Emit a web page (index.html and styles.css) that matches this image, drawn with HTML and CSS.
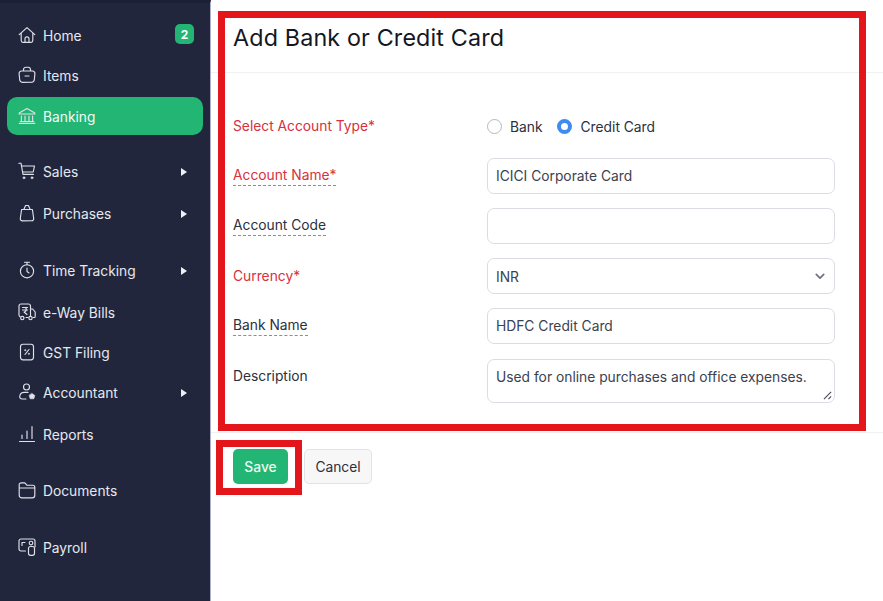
FILE: index.html
```html
<!DOCTYPE html>
<html lang="en">
<head>
<meta charset="utf-8">
<title>Add Bank or Credit Card</title>
<link rel="stylesheet" href="styles.css">
</head>
<body>
<div class="app">
  <nav class="sidebar">
    <a class="item first"><svg class="ico" viewBox="0 0 18 18"><path d="M1.200 8.600 9 1.600l7.800 7M3.200 7.200v7.400a1.800 1.800 0 0 0 1.800 1.800h8a1.800 1.800 0 0 0 1.800-1.800V7.200M7 16.200v-3.400a2 2 0 0 1 4 0v3.400"/></svg><span class="lbl">Home</span><span class="badge">2</span></a>
    <a class="item gap-g"><svg class="ico" viewBox="0 0 18 18"><path d="M5.500 5V3.600A2.400 2.400 0 0 1 7.900 1.200h2.200a2.400 2.400 0 0 1 2.400 2.400V5M3.500 5h11a2.500 2.500 0 0 1 2.400 2.800l-.6 6a2.800 2.800 0 0 1-2.800 2.500H4.500a2.800 2.800 0 0 1-2.800-2.500l-.6-6A2.500 2.500 0 0 1 3.500 5ZM7 10h4"/></svg><span class="lbl">Items</span></a>
    <a class="item active"><svg class="ico" viewBox="0 0 18 18"><path d="M1.200 6 9 1.400 16.800 6v1H1.200ZM3.400 9v5M7 9v5M11 9v5M14.600 9v5M1.200 16.400h15.600M2.200 14.500h13.600"/></svg><span class="lbl">Banking</span></a>
    <a class="item gap-a"><svg class="ico" viewBox="0 0 18 18"><path d="M.8 1.200h2.200l2 11.200h10.400M3.500 4h13l-1.300 6H4.600"/><circle class="dot" cx="6" cy="15.800" r="1"/><circle class="dot" cx="14" cy="15.800" r="1"/></svg><span class="lbl">Sales</span><span class="arrow"></span></a>
    <a class="item gap-b"><svg class="ico" viewBox="0 0 18 18"><path d="M3.600 5.500h10.800l1.300 9a2 2 0 0 1-2 2.300H4.300a2 2 0 0 1-2-2.300ZM5.800 5.500 7.600 1.500h2.800l1.800 4"/></svg><span class="lbl">Purchases</span><span class="arrow"></span></a>
    <a class="item gap-c"><svg class="ico" viewBox="0 0 18 18"><circle cx="9" cy="10.300" r="6.600"/><path d="M6.500 1.200h5M9 1.200v2.500M9 7v3.500l2 1.500"/></svg><span class="lbl">Time Tracking</span><span class="arrow"></span></a>
    <a class="item gap-b"><svg class="ico" viewBox="0 0 18 18"><path d="M12.500 13V3a2 2 0 0 0-2-2H3a2 2 0 0 0-2 2v9a2 2 0 0 0 1 1.700M8 14.500h2M12.500 6h2.200l2.500 3v4.500a1 1 0 0 1-1 1h-1M4.500 4.500h5M4.500 7h5M7 4.500c1.800 0 1.800 4.500-1 4.500l3 2.500"/><circle cx="4.300" cy="15" r="1.700"/><circle cx="12.500" cy="15" r="1.700"/></svg><span class="lbl">e-Way Bills</span></a>
    <a class="item gap-d"><svg class="ico" viewBox="0 0 18 18"><rect x="2.500" y="1.200" width="13" height="15.600" rx="2.500"/><path d="m11 6.500-4 5"/><circle class="dot" cx="7.200" cy="7.200" r=".6"/><circle class="dot" cx="10.800" cy="10.800" r=".6"/></svg><span class="lbl">GST Filing</span></a>
    <a class="item gap-d"><svg class="ico" viewBox="0 0 18 18"><circle cx="8.500" cy="4" r="3"/><path d="M10 9.400H6.200a4.400 4.400 0 0 0-4.400 3.500 2.400 2.400 0 0 0 2.400 3.100H8"/><path class="star" d="m14 10.500 2.800 2-1 3.300h-3.600l-1-3.300Z"/></svg><span class="lbl">Accountant</span><span class="arrow"></span></a>
    <a class="item gap-b"><svg class="ico" viewBox="0 0 18 18"><path d="M1.500 16.500h15M4 13.500V10M9 13.500V6M14 13.500V1.500"/></svg><span class="lbl">Reports</span></a>
    <a class="item gap-e"><svg class="ico" viewBox="0 0 18 18"><path d="M1.200 7V3.800a2 2 0 0 1 2-2h3.600l2 2.400h6a2 2 0 0 1 2 2V7M1.200 7h15.600v7.200a2.600 2.600 0 0 1-2.600 2.600H3.800a2.600 2.600 0 0 1-2.600-2.600Z"/></svg><span class="lbl">Documents</span></a>
    <a class="item gap-f"><svg class="ico" viewBox="0 0 18 18"><path d="M7.500 13H3a2 2 0 0 1-2-2V3a2 2 0 0 1 2-2h12a2 2 0 0 1 2 2v6M4 4.500h3M4 4.500v3"/><rect x="10.500" y="8.500" width="6" height="8.800" rx="2"/><circle cx="13" cy="5" r="1.800"/></svg><span class="lbl">Payroll</span></a>
  </nav>

  <main class="main">
    <header class="head"><h1 class="title">Add Bank or Credit Card</h1></header>
    <form class="form">
      <span class="label req top">Select Account Type*</span>
      <div class="radios">
        <span class="radio"></span><span class="radio-text">Bank</span>
        <span class="radio on"></span><span class="radio-text">Credit Card</span>
      </div>
      <span class="label req tip">Account Name*</span>
      <div class="field">ICICI Corporate Card</div>
      <span class="label tip">Account Code</span>
      <div class="field"></div>
      <span class="label req">Currency*</span>
      <div class="field select">INR<svg class="chev" viewBox="0 0 12 8"><path d="m1.500 1.500 4.500 4.500 4.500-4.500"/></svg></div>
      <span class="label tip">Bank Name</span>
      <div class="field">HDFC Credit Card</div>
      <span class="label desc">Description</span>
      <div class="field area">Used for online purchases and office expenses.<svg class="grip" viewBox="0 0 10 10"><path d="m1 9 8-8M6 9l3-3"/></svg></div>
    </form>
    <footer class="actions">
      <button class="btn save" type="button">Save</button>
      <button class="btn cancel" type="button">Cancel</button>
    </footer>
    <div class="mark mark-form"></div>
    <div class="mark mark-save"></div>
  </main>
</div>
</body>
</html>
```
FILE: styles.css
```css
* { box-sizing: border-box; }
html, body { margin: 0; height: 100%; }
body { font-family: Inter, "Liberation Sans", sans-serif; font-size: 13.8px; color: #2b3040; background: #fff; overflow: hidden; }
.app { display: flex; height: 601px; }

.sidebar { width: 211px; flex: none; background: #21263c; border-right: 1px solid #aeb1c8; border-top: 3px solid #1c2034; padding: 0 7px; display: flex; flex-direction: column; }
.item { display: flex; align-items: center; height: 38px; padding: 2px 11px 0 10.500px; color: #e6e8ee; border-radius: 10px; flex: none; }
.item.first { margin-top: 13px; }
.item.gap-g { margin-top: 2px; }
.item.gap-a { margin-top: 17px; }
.item.gap-b { margin-top: 4px; }
.item.gap-c { margin-top: 19px; }
.item.gap-d { margin-top: 2px; }
.item.gap-e { margin-top: 18px; }
.item.gap-f { margin-top: 19px; }
.item.active { background: #22b573; color: #f2fbf6; margin-top: 3px; }
.ico { width: 18px; height: 18px; flex: none; margin-top: -2px; margin-right: 7.500px; fill: none; stroke: #dfe1e9; stroke-width: 1.150; stroke-linecap: round; stroke-linejoin: round; }
.ico .dot, .ico .star { fill: #dfe1e9; stroke-width: .6; }
.lbl { flex: 1; white-space: nowrap; }
.badge { width: 19px; height: 20px; margin-right: -2px; margin-top: -4px; background: #22b573; color: #fff; border-radius: 5px; font-size: 12px; font-weight: 700; display: flex; align-items: center; justify-content: center; }
.arrow { width: 0; height: 0; margin-top: -1px; margin-right: 5px; border-left: 6px solid #eef0f4; border-top: 4px solid transparent; border-bottom: 4px solid transparent; }

.main { flex: 1; position: relative; min-width: 0; }
.head { height: 73px; padding: 23px 0 0 22px; border-bottom: 1px solid #f1f1f3; }
.title { margin: 0; font-size: 23.300px; line-height: 29px; font-weight: 400; color: #14171f; letter-spacing: .15px; }
.form { display: grid; grid-template-columns: 254px 348px; padding: 40px 0 0 22px; height: 360px; border-bottom: 1px solid #f1f1f3; align-content: start; row-gap: 14px; }
.label { height: fit-content; align-self: center; justify-self: start; line-height: 20px; white-space: nowrap; color: #2b3040; }
.label.req { color: #d8303d; }
.label.top { align-self: start; margin-top: 3px; }
.label.tip { border-bottom: 1px dashed #8a8d99; line-height: 19px; }
.label.desc { align-self: start; margin-top: 8px; }
.radios { display: flex; align-items: center; height: 27px; margin-bottom: 4px; color: #2b3040; }
.radio { width: 15px; height: 15px; border: 1px solid #b6b8c0; border-radius: 50%; flex: none; }
.radio.on { border: 4px solid #3f8cf0; background: #fff; }
.radio-text { margin: 0 14px 0 8px; }
.radio.on + .radio-text { margin-left: 9px; }
.field { height: 36px; border: 1px solid #dcdde3; border-radius: 7px; padding: 0 8px; display: flex; align-items: center; color: #3c4150; position: relative; }
.select { justify-content: space-between; padding-top: 1px; }
.chev { width: 10px; height: 7px; margin-right: 1px; fill: none; stroke: #6d7080; stroke-width: 2; stroke-linecap: round; stroke-linejoin: round; }
.area { height: 44px; margin-top: 1px; align-items: flex-start; padding-top: 7px; line-height: 20px; white-space: nowrap; }
.grip { position: absolute; right: 2px; bottom: 2px; width: 9px; height: 9px; fill: none; stroke: #444852; stroke-width: 1.200; }

.actions { display: flex; gap: 16px; padding: 16px 0 0 22px; }
.btn { height: 35px; border-radius: 5px; font: 13.8px Inter, "Liberation Sans", sans-serif; padding: 0; }
.save { width: 55px; background: #22b573; border: 0; color: #eefaf3; font-weight: 500; }
.cancel { width: 68px; background: #f7f7f8; border: 1px solid #e2e3e7; color: #2b3040; }

.mark { position: absolute; border: 7px solid #e3161c; pointer-events: none; }
.mark-form { left: 7px; top: 11px; width: 648px; height: 420px; }
.mark-save { left: 5px; top: 440px; width: 86px; height: 55px; }
```
